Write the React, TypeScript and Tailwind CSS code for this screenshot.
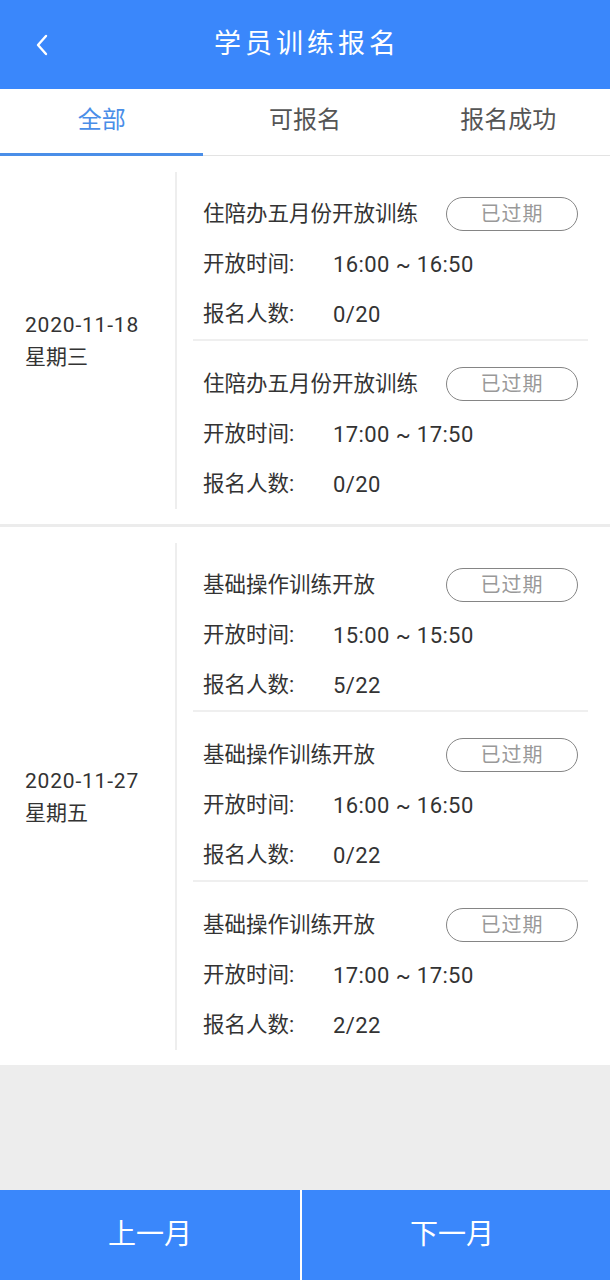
import React from "react";

type Session = { title: string; time: string; count: string };
type Day = { date: string; week: string; sessions: Session[] };

const days: Day[] = [
  {
    date: "2020-11-18",
    week: "星期三",
    sessions: [
      { title: "住陪办五月份开放训练", time: "16:00 ~ 16:50", count: "0/20" },
      { title: "住陪办五月份开放训练", time: "17:00 ~ 17:50", count: "0/20" },
    ],
  },
  {
    date: "2020-11-27",
    week: "星期五",
    sessions: [
      { title: "基础操作训练开放", time: "15:00 ~ 15:50", count: "5/22" },
      { title: "基础操作训练开放", time: "16:00 ~ 16:50", count: "0/22" },
      { title: "基础操作训练开放", time: "17:00 ~ 17:50", count: "2/22" },
    ],
  },
];

const tabs = ["全部", "可报名", "报名成功"];

function SessionItem({ s, last }: { s: Session; last: boolean }) {
  return (
    <div
      className={
        "pt-[17px] pl-[10px] pr-[10px] " +
        (last ? "" : "border-b-2 border-[#efefef] mb-[1px]")
      }
    >
      <div className="h-[50px] flex items-center justify-between">
        <span className="text-[21.5px] text-[#333]">{s.title}</span>
        <span className="w-[132px] h-[34px] rounded-full border border-[#858585] flex items-center justify-center text-[20px] text-[#999] tracking-[1px]">
          已过期
        </span>
      </div>
      <div className="h-[50px] flex items-center text-[21.5px] text-[#333]">
        <span className="w-[130px]">开放时间:</span>
        <span className="text-[22px] tracking-[0.4px]">{s.time}</span>
      </div>
      <div className="h-[50px] flex items-center text-[21.5px] text-[#333]">
        <span className="w-[130px]">报名人数:</span>
        <span className="text-[22px] tracking-[0.4px]">{s.count}</span>
      </div>
    </div>
  );
}

export default function App() {
  return (
    <div
      className="h-screen flex flex-col bg-[#ededed]"
      style={{ fontFamily: "Roboto, 'Noto Sans CJK SC', sans-serif" }}
    >
      {/* header */}
      <div className="h-[89px] shrink-0 bg-[#3a87fb] flex items-center relative">
        <svg
          className="absolute left-[34px] top-[33px]"
          width="16"
          height="24"
          viewBox="0 0 16 24"
          fill="none"
          stroke="white"
          strokeWidth="2.4"
          strokeLinecap="round"
          strokeLinejoin="round"
        >
          <path d="M12 3 L4 12 L12 21" />
        </svg>
        <h1 className="w-full text-center text-white text-[27px] tracking-[4px] pl-[4px]">学员训练报名</h1>
      </div>

      {/* tabs */}
      <div className="h-[67px] shrink-0 bg-white flex border-b border-[#e3e3e3]">
        {tabs.map((t, i) => (
          <div
            key={t}
            className={
              "flex-1 flex items-center justify-center text-[24px] pb-[4px] relative " +
              (i === 0 ? "text-[#4a8ee8]" : "text-[#555]")
            }
          >
            {t}
            {i === 0 && <div className="absolute left-0 right-0 bottom-[-1px] h-[3px] bg-[#4a8ee8]" />}
          </div>
        ))}
      </div>

      {/* list */}
      <div className="shrink-0 bg-white">
        {days.map((d, i) => (
          <div
            key={d.date}
            className={"flex pt-[16px] pb-[15px] " + (i > 0 ? "border-t-[3px] border-[#ececec]" : "")}
          >
            <div className="w-[177px] shrink-0 flex flex-col justify-center pl-[25px] text-[21px] text-[#333] leading-[32px] border-r-2 border-[#eeeeee]">
              <span className="tracking-[0.8px]">{d.date}</span>
              <span>{d.week}</span>
            </div>
            <div className="flex-1 pl-[16px] pr-[22px]">
              {d.sessions.map((s, j) => (
                <SessionItem key={j} s={s} last={j === d.sessions.length - 1} />
              ))}
            </div>
          </div>
        ))}
      </div>

      <div className="flex-1" />

      {/* bottom bar */}
      <div className="h-[90px] shrink-0 flex gap-[2px] bg-white">
        <button className="w-[300px] bg-[#3a87fb] text-white text-[28px]">上一月</button>
        <button className="flex-1 bg-[#3a87fb] text-white text-[28px] pr-[8px]">下一月</button>
      </div>
    </div>
  );
}
